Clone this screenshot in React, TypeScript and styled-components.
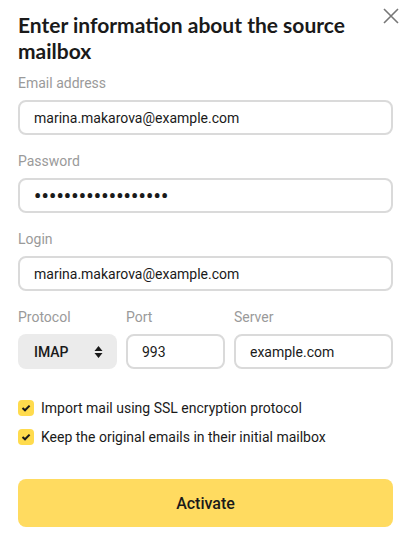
import styled, { createGlobalStyle } from "styled-components";

const GlobalStyle = createGlobalStyle`
    html, body {
        margin: 0;
        padding: 0;
        background: #ffffff;
    }
    body {
        font-family: Roboto, "Noto Sans", Arial, sans-serif;
        color: #000000;
    }
`;

const Dialog = styled.div`
    position: relative;
    box-sizing: border-box;
    width: 412px;
    height: 539px;
    padding: 12px 19px 0 18px;
    background: #fff;
`;

const CloseButton = styled.button`
    position: absolute;
    top: 6px;
    right: 11px;
    width: 20px;
    height: 20px;
    padding: 0;
    border: none;
    background: none;
    cursor: pointer;
    display: flex;
    align-items: center;
    justify-content: center;
`;

const Title = styled.h2`
    margin: 0 30px 0 0;
    font-family: Lato, sans-serif;
    font-size: 21px;
    line-height: 26px;
    font-weight: 700;
    color: #1a1a1a;
`;

const Form = styled.form`
    display: flex;
    flex-direction: column;
    margin-top: 9px;
`;

const Field = styled.div<{ $last?: boolean }>`
    display: flex;
    flex-direction: column;
    margin-bottom: ${(p) => (p.$last ? "0" : "16px")};
`;

const Label = styled.label`
    font-size: 14px;
    line-height: 20px;
    color: #9a9a9a;
    margin-bottom: 7px;
`;

const Input = styled.div<{ $dots?: boolean }>`
    box-sizing: border-box;
    height: 35px;
    border: 2px solid #dadada;
    border-radius: 8px;
    padding: 0 14px;
    display: flex;
    align-items: center;
    font-size: ${(p) => (p.$dots ? "20px" : "14px")};
    color: #1a1a1a;
    letter-spacing: ${(p) => (p.$dots ? "0.28px" : "0")};
    font-weight: ${(p) => (p.$dots ? 700 : 400)};
`;

const Row = styled.div`
    display: grid;
    grid-template-columns: 99px 99px 1fr;
    column-gap: 9px;
    margin-bottom: 24px;
`;

const Select = styled.div`
    box-sizing: border-box;
    height: 35px;
    border-radius: 8px;
    background: #ebebeb;
    padding: 0 14px 0 16px;
    display: flex;
    align-items: center;
    justify-content: space-between;
    font-size: 14px;
    font-weight: 500;
    color: #1a1a1a;
`;

const CheckRow = styled.label`
    display: flex;
    align-items: center;
    gap: 7px;
    height: 29px;
    font-size: 14px;
    color: #1a1a1a;
`;

const Box = styled.span`
    width: 16px;
    height: 16px;
    border-radius: 4px;
    background: #ffdb4d;
    display: flex;
    align-items: center;
    justify-content: center;
    flex: none;
`;

const Checks = styled.div`
    display: flex;
    flex-direction: column;
`;

const Submit = styled.button`
    margin-top: 28px;
    height: 48px;
    border: none;
    border-radius: 8px;
    background: #ffdb60;
    font-family: Roboto, sans-serif;
    font-size: 16px;
    font-weight: 500;
    color: #1a1a1a;
    cursor: pointer;
`;

const Check = () => (
    <Box>
        <svg width="10" height="8" viewBox="0 0 10 8">
            <path d="M1.5 4 L4 6.3 L8.6 1.6" fill="none" stroke="#1a1a1a" strokeWidth="2" />
        </svg>
    </Box>
);

const App = () => {
    return (
        <Dialog>
            <GlobalStyle />
            <CloseButton aria-label="Close">
                <svg width="16" height="16" viewBox="0 0 16 16">
                    <path d="M1 1 L15 15 M15 1 L1 15" stroke="#777" strokeWidth="1.6" />
                </svg>
            </CloseButton>
            <Title>Enter information about the source mailbox</Title>
            <Form>
                <Field>
                    <Label>Email address</Label>
                    <Input>marina.makarova@example.com</Input>
                </Field>
                <Field>
                    <Label>Password</Label>
                    <Input $dots>{"\u2022".repeat(18)}</Input>
                </Field>
                <Field>
                    <Label>Login</Label>
                    <Input>marina.makarova@example.com</Input>
                </Field>
                <Row>
                    <Field $last>
                        <Label>Protocol</Label>
                        <Select>
                            IMAP
                            <svg width="9" height="14" viewBox="0 0 9 14">
                                <path d="M4.5 1 L8.5 6 H0.5 Z M0.5 8 H8.5 L4.5 13 Z" fill="#1a1a1a" />
                            </svg>
                        </Select>
                    </Field>
                    <Field $last>
                        <Label>Port</Label>
                        <Input>993</Input>
                    </Field>
                    <Field $last>
                        <Label>Server</Label>
                        <Input>example.com</Input>
                    </Field>
                </Row>
                <Checks>
                    <CheckRow>
                        <Check />
                        Import mail using SSL encryption protocol
                    </CheckRow>
                    <CheckRow>
                        <Check />
                        Keep the original emails in their initial mailbox
                    </CheckRow>
                </Checks>
                <Submit type="button">Activate</Submit>
            </Form>
        </Dialog>
    );
};

export default App;
